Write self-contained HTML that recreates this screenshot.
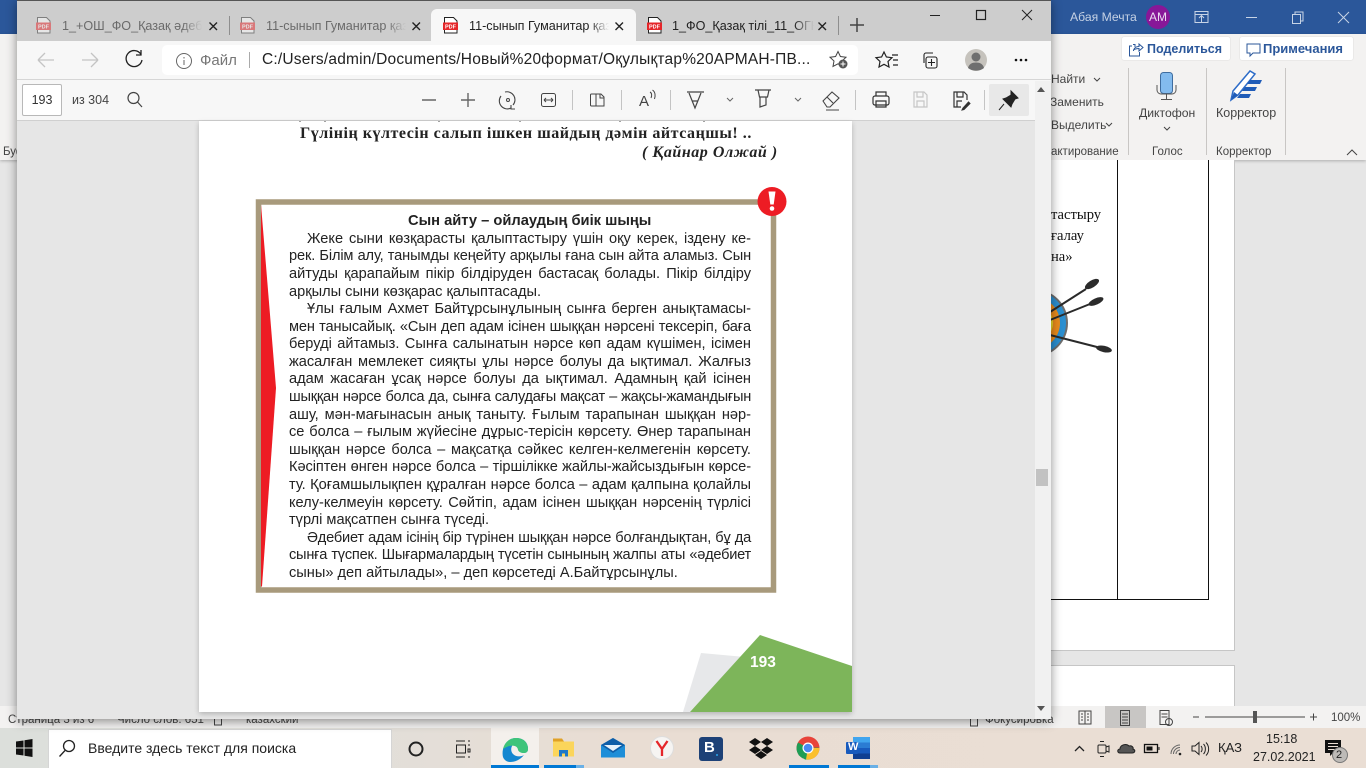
<!DOCTYPE html>
<html lang="kk"><head><meta charset="utf-8"><title>PDF</title>
<style>
html,body{margin:0;padding:0;width:1366px;height:768px;overflow:hidden;background:#e6e6e6;font-family:"Liberation Sans",sans-serif;}
body{filter:blur(.3px);}
div,span{position:absolute;white-space:nowrap;}
svg{position:absolute;left:0;top:0;}
.t{font-size:13px;color:#444;line-height:16px;}
.tab{font-size:12.6px;color:#6a6a6a;line-height:18px;top:17px;width:140px;overflow:hidden;-webkit-mask-image:linear-gradient(90deg,#000 86%,transparent);mask-image:linear-gradient(90deg,#000 86%,transparent);}
.l{left:289px;width:462px;font-size:14.6px;line-height:17px;color:#222;text-align:justify;text-align-last:justify;white-space:normal;}
.i{left:307px;width:444px;}
.e{text-align-last:left;width:auto;white-space:nowrap;}
</style></head><body>

<!-- WORD BEHIND -->
<div style="left:0;top:0;width:1366px;height:34px;background:#2b579a"></div>
<div style="left:0;top:34px;width:1366px;height:126px;background:#f3f2f1;box-shadow:0 1px 3px rgba(0,0,0,.25)"></div>
<div class="t" style="left:1070px;top:9px;color:#c5d1e4;font-size:12.2px">Абая Мечта</div>
<div style="left:1146px;top:5px;width:24px;height:24px;border-radius:12px;background:#881798;color:#eadcf0;font-size:12px;line-height:24px;text-align:center">АМ</div>
<div style="left:1122px;top:37px;width:108px;height:23px;background:#fff;border-radius:2px;box-shadow:0 0 1px #bbb"></div>
<div style="left:1240px;top:37px;width:113px;height:23px;background:#fff;border-radius:2px;box-shadow:0 0 1px #bbb"></div>
<div style="left:1147px;top:41px;font-size:12.5px;font-weight:bold;color:#2b579a;line-height:16px">Поделиться</div>
<div style="left:1263px;top:41px;font-size:13px;font-weight:bold;color:#2b579a;line-height:16px">Примечания</div>
<div class="t" style="left:1051px;top:71px;font-size:12px">Найти</div>
<div class="t" style="left:1050px;top:94px;font-size:12px">Заменить</div>
<div class="t" style="left:1051px;top:117px;font-size:12px">Выделить</div>
<div class="t" style="left:1051px;top:144px;font-size:11.5px">актирование</div>
<div class="t" style="left:1139px;top:105px;font-size:12.2px">Диктофон</div>
<div class="t" style="left:1152px;top:144px;font-size:11.5px">Голос</div>
<div class="t" style="left:1216px;top:105px;font-size:12.5px">Корректор</div>
<div class="t" style="left:1216px;top:144px;font-size:11.5px">Корректор</div>
<div class="t" style="left:3px;top:144px;font-size:11.5px">Буфер</div>

<!-- doc page -->
<div style="left:1040px;top:160px;width:194px;height:490px;background:#fff;border-right:1px solid #c6c6c6;border-bottom:1px solid #c6c6c6"></div>
<div style="left:1040px;top:665px;width:194px;height:43px;background:#fff;border-right:1px solid #c6c6c6;border-top:1px solid #c6c6c6"></div>
<div style="left:1117px;top:160px;width:1px;height:440px;background:#111"></div>
<div style="left:1208px;top:160px;width:1px;height:440px;background:#111"></div>
<div style="left:1040px;top:599px;width:168px;height:1px;background:#111"></div>
<div style="left:1051px;top:207px;font:14.6px/17px 'Liberation Serif',serif;color:#111">тастыру</div>
<div style="left:1051px;top:228px;font:14.6px/17px 'Liberation Serif',serif;color:#111">ғалау</div>
<div style="left:1051px;top:249px;font:14.6px/17px 'Liberation Serif',serif;color:#111">на»</div>

<svg width="1366" height="768" viewBox="0 0 1366 768" fill="none">
  <!-- target -->
  <circle cx="1034" cy="323" r="34" fill="#6d6d6d"/><circle cx="1034" cy="323" r="32" fill="#2b8fd0"/><circle cx="1034" cy="323" r="26" fill="#e98b1c"/><circle cx="1034" cy="323" r="19" fill="#e8dc2a"/><circle cx="1034" cy="323" r="12" fill="#d8201f"/>
  <path d="M1050 312L1086 289M1050 320L1090 304M1050 335L1097 347" stroke="#2a2a2a" stroke-width="2"/>
  <ellipse cx="1092" cy="284" rx="8" ry="3.500" transform="rotate(-32 1092 284)" fill="#2b2b2b"/>
  <ellipse cx="1096" cy="301.500" rx="8" ry="3.200" transform="rotate(-24 1096 301.500)" fill="#2b2b2b"/>
  <ellipse cx="1104" cy="349" rx="8" ry="3.200" transform="rotate(12 1104 349)" fill="#2b2b2b"/>
  <!-- ribbon separators -->
  <path d="M1128.500 68V155M1206.500 68V155M1285.500 68V155" stroke="#c8c6c4"/>
  <!-- title icons -->
  <path d="M1195 11.500h13v11h-13zM1195 14.500h13M1201.500 22v-6M1199 18l2.500-2.500l2.500 2.500" stroke="#c8d4e6"/>
  <path d="M1246 17.500h11M1292.500 14.500h8v9h-8zM1295 14.500v-2.500h8v9h-2.500M1338 12l11 11M1349 12l-11 11" stroke="#c8d4e6"/>
  <!-- share icons -->
  <path d="M1135 47v-2.500h-2M1132 46h-2.500v10h10v-4M1133.500 51c.3-3 2.700-4.500 5.500-4.500V44l4 3.500-4 3.500v-2.500c-2 0-4 .5-5.500 1.500z" stroke="#2b579a"/>
  <path d="M1247 44h13v9h-7l-3 3v-3h-3z" stroke="#2b579a"/>
  <!-- ribbon chevrons -->
  <path d="M1094 78l3 3l3-3M1106 123l3 3l3-3M1164 127l3 3l3-3M1347 155l5-5l5 5" stroke="#444"/>
  <!-- mic -->
  <rect x="1160.500" y="72.500" width="12" height="21" rx="3" fill="#83bbee" stroke="#3f6d9f"/>
  <path d="M1157 85v5a4 4 0 0 0 4 4h11a4 4 0 0 0 4-4v-5M1166.500 94v5M1161 99.500h11" stroke="#555"/>
  <!-- pen -->
  <path d="M1231 100l2-9l17-20l5 3l-17 21z" stroke="#2d6cc8" stroke-width="1.500" fill="#fff"/>
  <path d="M1231 100l3-8l4 3z" fill="#1f5cb8"/>
  <path d="M1250 80h12l-2 4h-13zM1245 87h12l-2 4h-13zM1240 94h11l-2 4h-12z" fill="#1f5cb8"/>
</svg>

<!-- status bar -->
<div style="left:0;top:706px;width:1366px;height:22px;background:#f3f2f1"></div>
<div style="left:1105px;top:706px;width:41px;height:22px;background:#c8c6c4"></div>
<div class="t" style="left:8px;top:712px;font-size:11.5px">Страница 3 из 6</div>
<div class="t" style="left:117px;top:712px;font-size:11.5px">Число слов: 651</div>
<div class="t" style="left:246px;top:712px;font-size:11.5px">казахский</div>
<div class="t" style="left:985px;top:712px;font-size:11.5px">Фокусировка</div>
<div class="t" style="left:1331px;top:710px;font-size:11.5px">100%</div>
<svg width="1366" height="768" viewBox="0 0 1366 768" fill="none" stroke="#444">
  <path d="M214.500 716v9h7v-9M970.500 716v10h7v-10"/>
  <path d="M1079 711h12v13h-12zM1085 711v13M1081 714h2M1081 717h2M1081 720h2M1087 714h2M1087 717h2M1087 720h2"/>
  <path d="M1120.500 710.500h9v15h-9zM1122 714h6M1122 717h6M1122 720h6M1122 723h6"/>
  <path d="M1160 710.500h9v14h-9zM1161.500 714h6M1161.500 717h6"/>
  <circle cx="1169" cy="722" r="3.500"/>
  <path d="M1193 717h6M1205 717h100M1310 717h7M1313.500 713.500v7"/>
  <rect x="1253" y="711" width="4" height="12" fill="#555" stroke="none"/>
</svg>

<!-- taskbar -->
<div style="left:0;top:728px;width:1366px;height:40px;background:linear-gradient(90deg,#dcdfdb 0,#e1dfda 25%,#e9ddd3 45%,#eaded4 100%)"></div>
<div style="left:48px;top:729px;width:342px;height:38px;background:#fff;border:1px solid #d5d5d5"></div>
<div style="left:88px;top:740px;font-size:14px;line-height:17px;color:#222">Введите здесь текст для поиска</div>
<div style="left:491px;top:728px;width:48px;height:37px;background:#f4f0ec"></div>
<div style="left:491px;top:765px;width:48px;height:3px;background:#0078d4"></div>
<div style="left:544px;top:765px;width:32px;height:3px;background:#0078d4"></div>
<div style="left:576px;top:765px;width:8px;height:3px;background:#6ab0e6"></div>
<div style="left:789px;top:765px;width:40px;height:3px;background:#0078d4"></div>
<div style="left:838px;top:765px;width:32px;height:3px;background:#0078d4"></div>
<div style="left:870px;top:765px;width:8px;height:3px;background:#6ab0e6"></div>
<div style="left:1218px;top:740px;font-size:13px;line-height:16px;color:#222">ҚАЗ</div>
<div style="left:1266px;top:731px;font-size:12.5px;line-height:16px;color:#222">15:18</div>
<div style="left:1253px;top:749px;font-size:12.5px;line-height:16px;color:#222">27.02.2021</div>
<svg width="1366" height="768" viewBox="0 0 1366 768" fill="none">
  <path d="M16 741.500l7.500-1v7h-7.500zM24.500 740.300l8-1.300v8.500h-8zM16 748.500h7.500v7l-7.500-1zM24.500 748.500h8V757l-8-1.300z" fill="#111"/>
  <circle cx="69" cy="746" r="5.500" stroke="#222" stroke-width="1.300"/><path d="M65 750.500l-5.500 6" stroke="#222" stroke-width="1.300"/>
  <circle cx="416" cy="749" r="6.500" stroke="#222" stroke-width="2"/>
  <path d="M456 741h9M456 757h9M456.500 745h9v8h-9zM468 741h2M468 757h2M468 745h2M468 749h2v3h-2z" stroke="#222"/>
  <!-- edge -->
  <path d="M503 757c-2-8 3-19 13-19c8 0 12 5 12 11c0 3-2 4-4 4c-3 0-6-2-6-5c0-3 1-3 1-5c-7-2-10 7-6 11c3 3 8 3 11 1c-4 5-9 7-14 7c-3 0-6-2-7-5z" fill="#1487d0"/>
  <path d="M503 749c2-8 8-11 13-11c8 0 12 5 12 11c0 3-2 4-4 4c-3 0-5-1-6-3c0-4-6-7-15-1z" fill="#3ec47a"/>
  <!-- explorer -->
  <path d="M553 738.500h9l2 3h-11z" fill="#e0a126"/><path d="M553 741.500h21v15h-21z" fill="#fbd55b"/><path d="M559 750h9v6.500h-3v-3h-3v3h-3z" fill="#1e78c8"/>
  <!-- mail -->
  <path d="M601 745l12-7l12 7v12.500h-24z" fill="#1e8ed8"/><path d="M601 745l12 8l12-8l-12-7z" fill="#0f5ea8"/><path d="M604 745h18l-9 6z" fill="#e7f2fb"/>
  <!-- yandex -->
  <circle cx="662" cy="748" r="11.500" fill="#f6f4f2" stroke="#ddd"/><path d="M656.500 741l5.500 8v7M667.500 741l-5.500 8" stroke="#e5262a" stroke-width="2.300"/>
  <!-- booking -->
  <rect x="699" y="737" width="24" height="24" rx="3" fill="#1d4177"/><circle cx="717" cy="755" r="1" fill="#2aa1e8"/>
  <!-- dropbox -->
  <path d="M755 738l6 4l-6 4l-6-4zM767 738l6 4l-6 4l-6-4zM755 746l6 4l-6 4l-6-4zM767 746l6 4l-6 4l-6-4zM761 751l6 4l-6 4l-6-4z" fill="#111"/>
  <!-- chrome -->
  <circle cx="808" cy="748" r="11.500" fill="#e8433a"/><path d="M808 748L798 742.500A11.500 11.500 0 0 0 803 758.500Z" fill="#1f9d55"/><path d="M798.500 755L808 748l10.500-.500A11.500 11.500 0 0 1 805 759.500Z" fill="#1f9d55"/><path d="M808 748h11.500A11.500 11.500 0 0 1 806 759.400Z" fill="#fbc02d"/><circle cx="808" cy="748" r="5.500" fill="#fff"/><circle cx="808" cy="748" r="4.300" fill="#4a89f3"/>
  <!-- word -->
  <rect x="853" y="737" width="17" height="5.500" fill="#41a5ee"/><rect x="853" y="742.500" width="17" height="5.500" fill="#2b7cd3"/><rect x="853" y="748" width="17" height="5.500" fill="#185abd"/><rect x="853" y="753.500" width="17" height="5.500" fill="#103f91"/>
  <rect x="846" y="742" width="12" height="12" rx="1" fill="#185abd"/>
  <!-- tray -->
  <path d="M1075 751l4.500-4.500l4.500 4.500" stroke="#222" stroke-width="1.300"/>
  <path d="M1099 745h6a1 1 0 0 1 1 1v6a1 1 0 0 1-1 1h-6a1 1 0 0 1-1-1v-6a1 1 0 0 1 1-1zM1106 747l3-1v6l-3-1M1100 741.500h4M1100 756.500h4" stroke="#222"/>
  <path d="M1120 753c-3 0-3-4 0-4c0-4 6-6 9-3c3-1 5 2 4 3c3 1 2 4-1 4z" fill="#555" stroke="#222"/>
  <rect x="1144.500" y="744.500" width="13" height="8" stroke="#111" stroke-width="1.300"/><rect x="1146.500" y="746.500" width="6" height="4" fill="#111"/><path d="M1159 747v3" stroke="#111"/>
  <path d="M1171 754a9 9 0 0 1 9-9M1173.500 754a6.500 6.500 0 0 1 6.500-6.500M1176 754a4 4 0 0 1 4-4" stroke="#666"/><circle cx="1180" cy="754" r="1.300" fill="#222"/>
  <path d="M1192 746h3l4-3.500v12l-4-3.500h-3zM1201 746c1.500 1.500 1.500 4.500 0 6M1203.500 744c2.500 2.500 2.500 7.500 0 10M1206 742.500c3.500 3.500 3.500 9.500 0 13" stroke="#222"/>
  <path d="M1325 740h16v13h-8l-3 3v-3h-5z" fill="#111"/><path d="M1328 743.500h10M1328 746.500h10M1328 749.500h7" stroke="#e9ddd3"/>
  <circle cx="1340" cy="755" r="7.500" fill="#bdbab7" stroke="#777"/>
</svg>
<div style="left:704px;top:740px;font-size:15px;line-height:16px;font-weight:bold;color:#fff">B</div>
<div style="left:848px;top:741px;font-size:11px;line-height:13px;font-weight:bold;color:#fff">W</div>
<div style="left:1336px;top:748px;font-size:11px;line-height:14px;color:#222">2</div>

<!-- EDGE WINDOW -->
<div style="left:17px;top:0;width:1034px;height:719px;background:#e6e6e6;box-shadow:0 2px 10px rgba(0,0,0,.45);overflow:hidden">
  <div style="left:0;top:0;width:1034px;height:1px;background:#555"></div>
  <div style="left:0;top:1px;width:1034px;height:40px;background:#cdcdcd"></div>
  <div style="left:0;top:41px;width:1034px;height:38px;background:#f7f7f7"></div>
  <div style="left:0;top:79px;width:1034px;height:1px;background:#d6d6d6"></div>
  <div style="left:0;top:80px;width:1034px;height:40px;background:#f7f7f7"></div>
  <div style="left:0;top:120px;width:1034px;height:1px;background:#d0d0d0"></div>
  <div style="left:414px;top:9px;width:205px;height:32px;background:#f7f7f7;border-radius:6px 6px 0 0"></div>
  <div style="left:145px;top:45px;width:696px;height:30px;background:#fff;border-radius:5px"></div>
  <div style="left:5px;top:84px;width:38px;height:30px;background:#fff;border:1px solid #b8b8b8;border-radius:2px"></div>
  <div style="left:972px;top:84px;width:40px;height:32px;background:#e8e8e8;border-radius:2px"></div>
  <div style="left:1018px;top:121px;width:16px;height:598px;background:#f1f1f1"></div>
  <div style="left:1018px;top:81px;width:16px;height:40px;background:#f1f1f1"></div>
  <div style="left:1019px;top:469px;width:12px;height:17px;background:#c2c2c2"></div>
</div>

<div class="tab" style="left:62px">1_+ОШ_ФО_Қазақ әдебиеті</div>
<div class="tab" style="left:266px">11-сынып Гуманитар қазақ</div>
<div class="tab" style="left:469px;color:#222">11-сынып Гуманитар қазақ</div>
<div class="tab" style="left:672px;color:#222;width:142px">1_ФО_Қазақ тілі_11_ОГН.pdf</div>
<div style="left:200px;top:52px;font-size:15px;line-height:17px;color:#777">Файл</div>
<div style="left:262px;top:51px;font-size:15.500px;line-height:18px;color:#222;letter-spacing:.2px">C:/Users/admin/Documents/Новый%20формат/Оқулықтар%20АРМАН-ПВ...</div>
<div style="left:23px;top:92px;width:38px;text-align:center;font-size:12.500px;line-height:16px;color:#333">193</div>
<div style="left:72px;top:92px;font-size:12.500px;line-height:16px;color:#444">из 304</div>

<svg width="1366" height="768" viewBox="0 0 1366 768" fill="none">
  <!-- pdf icons -->
  <g opacity=".5"><path d="M37.500 17.500h9l3.500 3.500v12h-12.500z" fill="#fff" stroke="#333"/><rect x="36" y="22.500" width="15" height="7.500" fill="#e5262a"/><text x="38" y="28.500" font-family="Liberation Sans" font-size="5.500" font-weight="bold" fill="#fff">PDF</text>
  <path d="M241.500 17.500h9l3.500 3.500v12h-12.500z" fill="#fff" stroke="#333"/><rect x="240" y="22.500" width="15" height="7.500" fill="#e5262a"/><text x="242" y="28.500" font-family="Liberation Sans" font-size="5.500" font-weight="bold" fill="#fff">PDF</text></g>
  <path d="M444.500 17.500h9l3.500 3.500v12h-12.500z" fill="#fff" stroke="#222"/><rect x="443" y="22.500" width="15" height="7.500" fill="#e5262a"/><text x="445" y="28.500" font-family="Liberation Sans" font-size="5.500" font-weight="bold" fill="#fff">PDF</text>
  <path d="M648.500 17.500h9l3.500 3.500v12h-12.500z" fill="#fff" stroke="#222"/><rect x="647" y="22.500" width="15" height="7.500" fill="#e5262a"/><text x="649" y="28.500" font-family="Liberation Sans" font-size="5.500" font-weight="bold" fill="#fff">PDF</text>
  <!-- tab close -->
  <path d="M209.500 22.500l7.500 7.500M217 22.500l-7.500 7.500M412.500 22.500l7.500 7.500M420 22.500l-7.500 7.500M615.500 22.500l7.500 7.500M623 22.500l-7.500 7.500M818.500 22.500l7.500 7.500M826 22.500l-7.500 7.500" stroke="#222" stroke-width="1.400"/>
  <path d="M229.500 16v19M838.500 16v19" stroke="#8e8e8e"/>
  <path d="M857 18v14M850 25h14" stroke="#444" stroke-width="1.500"/>
  <path d="M930 15.500h10" stroke="#222"/><rect x="976.500" y="10.500" width="9" height="9" stroke="#222" stroke-width="1.200"/><path d="M1022 10l10 10M1032 10l-10 10" stroke="#222"/>
  <!-- nav -->
  <path d="M38 60h16M38 60l7-7M38 60l7 7M82 60h16M98 60l-7-7M98 60l-7 7" stroke="#c4c4c4" stroke-width="1.300"/>
  <path d="M141 54.500a8 8 0 1 0 1 5.500M141 50v5h-5" stroke="#222" stroke-width="1.300"/>
  <circle cx="184" cy="61" r="7.500" stroke="#666"/><path d="M184 60v5M184 57v1.500" stroke="#666"/>
  <path d="M249.500 52v16" stroke="#aaa"/>
  <path d="M838 51.500l2.400 5 5.600.7-4 3.800 1 5.500-5-2.700-5 2.700 1-5.500-4-3.800 5.600-.7z" stroke="#444"/>
  <circle cx="843" cy="64" r="4.500" fill="#555"/><path d="M840.500 64h5M843 61.500v5" stroke="#fff"/>
  <path d="M884 52l2.400 5 5.600.7-4 3.800 1 5.500-5-2.700-5 2.700 1-5.500-4-3.800 5.600-.7zM892 55h6M893 60h5M893 65h5" stroke="#222" stroke-width="1.200"/>
  <path d="M924 63v-8a2 2 0 0 1 2-2h7M928 57h7a2 2 0 0 1 2 2v7a2 2 0 0 1-2 2h-7a2 2 0 0 1-2-2v-7a2 2 0 0 1 2-2zM931.500 59v7M928 62.500h7" stroke="#222" stroke-width="1.100"/>
  <circle cx="976" cy="60" r="11" fill="#c6c3bd"/><circle cx="976" cy="57" r="4.500" fill="#6f6f6f"/><path d="M968 68c1-4 4-5.500 8-5.500s7 1.500 8 5.500c-4 3.500-12 3.500-16 0z" fill="#6f6f6f"/>
  <circle cx="1016" cy="60" r="1.300" fill="#111"/><circle cx="1021" cy="60" r="1.300" fill="#111"/><circle cx="1026" cy="60" r="1.300" fill="#111"/>
  <!-- pdf toolbar -->
  <circle cx="133.500" cy="98" r="5.500" stroke="#444" stroke-width="1.200"/><path d="M137.500 102l4.500 5" stroke="#444" stroke-width="1.200"/>
  <path d="M422 100h14M461 100h14M468 93v14" stroke="#666" stroke-width="1.400"/>
  <path d="M505 92a8 8 0 0 1 8 13M511 108a8 8 0 0 1-10-12M511 105v4h4" stroke="#444" stroke-width="1.100"/><circle cx="508" cy="100" r="1.500" stroke="#444"/>
  <rect x="541.500" y="93.500" width="14" height="13" rx="2" stroke="#444"/><path d="M544 100h9M544 100l2-2M544 100l2 2M553 100l-2-2M553 100l-2 2" stroke="#444"/>
  <path d="M572.500 90v20M621.500 90v20M670.500 90v20M855.500 90v20M984.500 90v20" stroke="#c4c4c4"/>
  <path d="M596 94v12h-4.500a1 1 0 0 1-1-1v-10a1 1 0 0 1 1-1zM596 94h5l3 3v9h-8M600 94v4h4" stroke="#444"/>
  <text x="639" y="106" font-family="Liberation Sans" font-size="15" fill="#444">A</text><path d="M650 92c2 1 2 4 1 6M652.500 90c3 2 3 6 2 9" stroke="#444"/>
  <path d="M687 92h17M689 93l6 15l6-15M692 101h6" stroke="#444" stroke-width="1.200"/>
  <path d="M727 98l3 3l3-3M795 98l3 3l3-3" stroke="#666"/>
  <path d="M755 90h16M758 90l1.500 7h8l1.500-7M760 97v10l6-2v-8" stroke="#444" stroke-width="1.200"/>
  <path d="M823 101l9-9l7 6l-9 9h-3zM827 97l6 6M826 110h13" stroke="#444" stroke-width="1.100"/>
  <path d="M876 96v-4h10v4M873 103v-5a2 2 0 0 1 2-2h12a2 2 0 0 1 2 2v5a2 2 0 0 1-2 2h-12a2 2 0 0 1-2-2zM876 101h10v6h-10z" stroke="#333" stroke-width="1.200"/>
  <path d="M914 92h10l3 3v12h-13zM917 92v5h6v-5M917 107v-6h7v6" stroke="#c6c6c6" stroke-width="1.200"/>
  <path d="M961 107h-7v-15h10l3 3v5M957 92v5h6v-5M957 107v-6h5" stroke="#333" stroke-width="1.200"/><path d="M963 108l-1 2 2-.500 6-6-1.500-1.500z" fill="#333" stroke="#333"/>
  <path d="M1011 91l7 7l-3 1l-3 5l-1 3l-8-8l3-1l5-3zM1004 104l-5 6" stroke="#222" fill="#222"/>
  <path d="M1041 87l-4 5h8zM1041 711l-4-5h8z" fill="#555"/>
</svg>

<!-- PDF PAGE -->
<div style="left:199px;top:121px;width:653px;height:591px;background:#fff;box-shadow:0 2px 5px rgba(0,0,0,.22);overflow:hidden">
  <div style="left:101px;top:4px;font:bold 16px/17px 'Liberation Serif',serif;letter-spacing:.53px;color:#222">Гүлінің күлтесін салып ішкен шайдың дәмін айтсаңшы! ..</div>
  <div style="left:443px;top:23px;font:italic bold 16px/17px 'Liberation Serif',serif;letter-spacing:.55px;color:#222">( Қайнар Олжай )</div>
</div>
<svg width="1366" height="768" viewBox="0 0 1366 768" fill="none">
  <path d="M300 121v1M325 121v1M439 121v1M520 121v1M620 121v1M704 121v1" stroke="#444"/>
  <rect x="255.500" y="199" width="521" height="394" fill="#fff"/>
  <path d="M258.500 202h515v388h-515z" stroke="#a89a7c" stroke-width="5.500"/>
  <path d="M261 204.500L276 388L262 586.500H261Z" fill="#ed1c24"/>
  <circle cx="772" cy="201.500" r="14.500" fill="#ed1c24"/>
  <path d="M768.500 191.500h7l-1.800 13h-3.400z" fill="#fff"/><circle cx="772" cy="208.500" r="2.300" fill="#fff"/>
  <path d="M701 653L745 657L690 712H683Z" fill="#e7e8ea"/>
  <path d="M760 635L852 666V712H690Z" fill="#7db55a"/>
</svg>
<div style="left:750px;top:654px;font-size:15.500px;line-height:17px;font-weight:bold;color:#fff">193</div>

<div class="l e" style="left:408px;top:213px;font-weight:bold;font-size:14.700px">Сын айту – ойлаудың биік шыңы</div>
<div class="l i" style="top:231px">Жеке сыни көзқарасты қалыптастыру үшін оқу керек, іздену ке-</div>
<div class="l" style="top:248px">рек. Білім алу, танымды кеңейту арқылы ғана сын айта аламыз. Сын</div>
<div class="l" style="top:266px">айтуды қарапайым пікір білдіруден бастасақ болады. Пікір білдіру</div>
<div class="l e" style="top:284px">арқылы сыни көзқарас қалыптасады.</div>
<div class="l i" style="top:301px">Ұлы ғалым Ахмет Байтұрсынұлының сынға берген анықтамасы-</div>
<div class="l" style="top:319px">мен танысайық. «Сын деп адам ісінен шыққан нәрсені тексеріп, баға</div>
<div class="l" style="top:336px">беруді айтамыз. Сынға салынатын нәрсе көп адам күшімен, ісімен</div>
<div class="l" style="top:354px">жасалған мемлекет сияқты ұлы нәрсе болуы да ықтимал. Жалғыз</div>
<div class="l" style="top:371px">адам жасаған ұсақ нәрсе болуы да ықтимал. Адамның қай ісінен</div>
<div class="l" style="top:389px">шыққан нәрсе болса да, сынға салудағы мақсат – жақсы-жамандығын</div>
<div class="l" style="top:407px">ашу, мән-мағынасын анық таныту. Ғылым тарапынан шыққан нәр-</div>
<div class="l" style="top:424px">се болса – ғылым жүйесіне дұрыс-терісін көрсету. Өнер тарапынан</div>
<div class="l" style="top:442px">шыққан нәрсе болса – мақсатқа сәйкес келген-келмегенін көрсету.</div>
<div class="l" style="top:459px">Кәсіптен өнген нәрсе болса – тіршілікке жайлы-жайсыздығын көрсе-</div>
<div class="l" style="top:477px">ту. Қоғамшылықпен құралған нәрсе болса – адам қалпына қолайлы</div>
<div class="l" style="top:495px">келу-келмеуін көрсету. Сөйтіп, адам ісінен шыққан нәрсенің түрлісі</div>
<div class="l e" style="top:512px">түрлі мақсатпен сынға түседі.</div>
<div class="l i" style="top:530px">Әдебиет адам ісінің бір түрінен шыққан нәрсе болғандықтан, бұ да</div>
<div class="l" style="top:547px">сынға түспек. Шығармалардың түсетін сынының жалпы аты «әдебиет</div>
<div class="l e" style="top:565px">сыны» деп айтылады», – деп көрсетеді А.Байтұрсынұлы.</div>
<script>
document.querySelectorAll('.l:not(.e)').forEach(function(d){
  var target=d.getBoundingClientRect().width,s=d.style;
  s.width='auto';s.whiteSpace='nowrap';s.textAlignLast='left';
  var w=d.getBoundingClientRect().width,n=d.textContent.length;
  if(w>target-3){s.letterSpacing=((target-w-3)/n)+'px';}
  s.width=target+'px';s.whiteSpace='normal';s.textAlignLast='justify';
});
</script>
</body></html>
